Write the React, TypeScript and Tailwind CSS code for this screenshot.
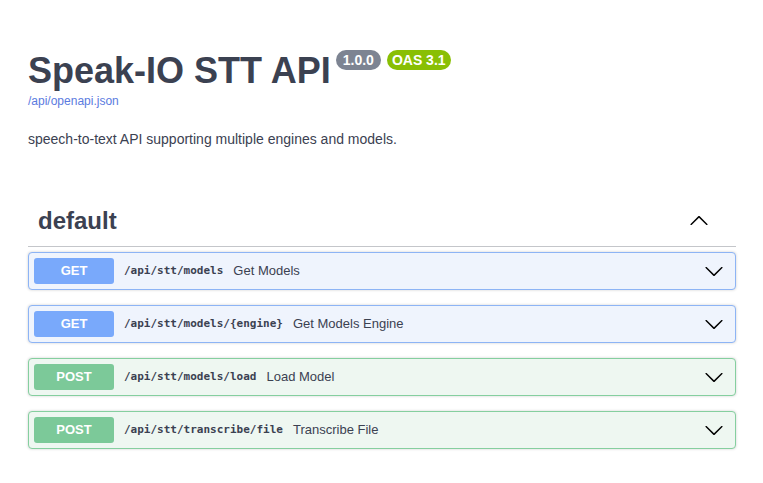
import React from "react";

// 엔드포인트 타입
interface IOp {
  method: "GET" | "POST";
  path: string;
  summary: string;
}

const ops: IOp[] = [
  { method: "GET", path: "/api/stt/models", summary: "Get Models" },
  { method: "GET", path: "/api/stt/models/{engine}", summary: "Get Models Engine" },
  { method: "POST", path: "/api/stt/models/load", summary: "Load Model" },
  { method: "POST", path: "/api/stt/transcribe/file", summary: "Transcribe File" },
];

function Arrow({ up = false }: { up?: boolean }) {
  return (
    <svg
      width="20"
      height="20"
      viewBox="0 0 20 20"
      className={up ? "rotate-180" : ""}
      fill="#000"
    >
      <path d="M17.418 6.109c.272-.268.709-.268.979 0s.271.701 0 .969l-7.908 7.83c-.27.268-.707.268-.979 0l-7.908-7.83c-.27-.268-.27-.701 0-.969.271-.268.709-.268.979 0L10 13.25l7.418-7.141z" />
    </svg>
  );
}

function OpBlock({ op }: { op: IOp }) {
  const isGet = op.method === "GET";
  return (
    <div
      className={
        isGet
          ? "mb-[15px] rounded border border-[#8db4f5] bg-[#eff4fd] shadow-[0_0_3px_rgba(0,0,0,0.19)]"
          : "mb-[15px] rounded border border-[#85cf9f] bg-[#eef7f1] shadow-[0_0_3px_rgba(0,0,0,0.19)]"
      }
    >
      <div className="flex h-9 items-center p-[5px]">
        <span
          className={
            isGet
              ? "flex h-[26px] w-20 items-center justify-center rounded-[3px] bg-[#79a9fb] text-[13px] font-bold text-white"
              : "flex h-[26px] w-20 items-center justify-center rounded-[3px] bg-[#7cc999] text-[13px] font-bold text-white"
          }
        >
          {op.method}
        </span>
        <span className="px-[10px] font-['DejaVu_Sans_Mono',monospace] text-[11px] font-bold text-[#3b4151]">
          {op.path}
        </span>
        <span className="flex-1 text-[13px] text-[#3b4151]">{op.summary}</span>
        <span className="mr-[6px] flex items-center">
          <Arrow />
        </span>
      </div>
    </div>
  );
}

export default function App() {
  return (
    <div className="min-h-screen bg-white pl-[28px] pr-[27px] font-['Liberation_Sans',Arial,sans-serif] text-[#3b4151]">
      {/* 정보 영역 */}
      <div className="pt-[50px]">
        <div className="flex items-start">
          <h2 className="text-[36px] font-bold leading-[41px] text-[#3b4151]">Speak-IO STT API</h2>
          <span className="ml-[5px] rounded-full bg-[#7d8492] px-[7px] text-[14px] font-bold leading-[20px] text-white">
            1.0.0
          </span>
          <span className="ml-[6px] rounded-full bg-[#89bf04] px-[5px] text-[14px] font-bold leading-[20px] text-white">
            OAS 3.1
          </span>
        </div>
        <a className="mt-[3px] block text-[12px] leading-[14px] text-[#5b7be0]">/api/openapi.json</a>
        <p className="mt-[23px] text-[14px] leading-[17px]">
          speech-to-text API supporting multiple engines and models.
        </p>
      </div>

      {/* 태그 섹션 */}
      <div className="mt-[47px]">
        <div className="mb-[5px] flex h-[52px] items-center border-b border-[#3b4151]/30 pl-[10px] pr-[27px]">
          <h3 className="flex-1 text-[24px] font-bold">default</h3>
          <Arrow up />
        </div>
        {ops.map((op) => (
          <OpBlock key={op.path} op={op} />
        ))}
      </div>
    </div>
  );
}
